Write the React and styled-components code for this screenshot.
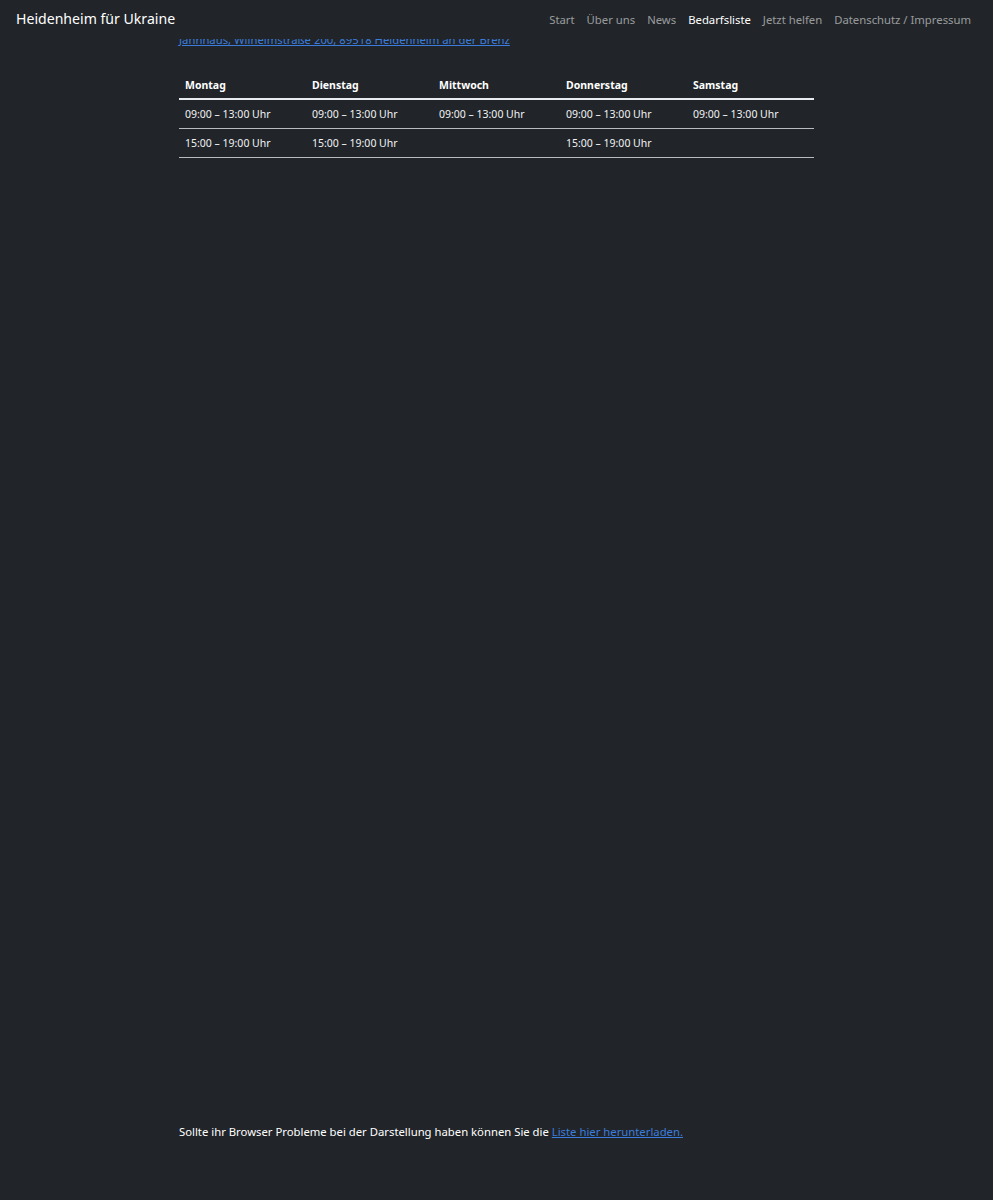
import React from "react";
import styled, { createGlobalStyle } from "styled-components";

const Global = createGlobalStyle`
  html, body { margin: 0; padding: 0; background: #212529; }
  body {
    font-family: "Noto Sans", "Open Sans", sans-serif;
    color: #e9ecef;
    min-height: 1200px;
  }
`;

const Navbar = styled.nav`
  position: fixed;
  top: 0;
  left: 0;
  right: 0;
  height: 36px;
  background: #212529;
  display: flex;
  align-items: center;
  justify-content: space-between;
  padding: 0 22px 3px 16px;
  z-index: 10;
`;

const Brand = styled.a`
  color: #fff;
  font-size: 14.1px;
  text-decoration: none;
`;

const NavList = styled.ul`
  display: flex;
  gap: 12px;
  list-style: none;
  margin: 0;
  padding: 0;
`;

const NavLink = styled.a`
  font-size: 11.3px;
  text-decoration: none;
  color: ${(p) => (p.$active ? "#ffffff" : "rgba(255,255,255,0.55)")};
`;

const Main = styled.main`
  width: 635px;
  margin: 0 auto;
  padding-top: 31px;
`;

const Address = styled.a`
  display: block;
  font-size: 11.3px;
  line-height: 18px;
  color: #3b7ddd;
  text-decoration: underline;
`;

const Table = styled.table`
  width: 100%;
  border-collapse: collapse;
  table-layout: fixed;
  margin-top: 22px;
  font-size: 10.5px;
`;

const Th = styled.th`
  text-align: left;
  font-weight: 700;
  color: #fff;
  padding: 7px 6px 6px;
  border-bottom: 2px solid #e9ecef;
`;

const Td = styled.td`
  color: #f1f3f5;
  padding: 7px 6px;
  border-bottom: 1px solid #b8bcc0;
  height: 14px;
`;

const SheetFrame = styled.div`
  height: 966px;
`;

const Note = styled.p`
  margin: 0;
  font-size: 11.3px;
  color: #fff;
`;

const NoteLink = styled.a`
  color: #3b7ddd;
  text-decoration: underline;
`;

const days = ["Montag", "Dienstag", "Mittwoch", "Donnerstag", "Samstag"];
const rows = [
  ["09:00 – 13:00 Uhr", "09:00 – 13:00 Uhr", "09:00 – 13:00 Uhr", "09:00 – 13:00 Uhr", "09:00 – 13:00 Uhr"],
  ["15:00 – 19:00 Uhr", "15:00 – 19:00 Uhr", "", "15:00 – 19:00 Uhr", ""],
];

const links = ["Start", "Über uns", "News", "Bedarfsliste", "Jetzt helfen", "Datenschutz / Impressum"];

export default function App() {
  return (
    <>
      <Global />
      <Navbar>
        <Brand href="#">Heidenheim für Ukraine</Brand>
        <NavList>
          {links.map((l) => (
            <li key={l}>
              <NavLink href="#" $active={l === "Bedarfsliste"}>{l}</NavLink>
            </li>
          ))}
        </NavList>
      </Navbar>
      <Main>
        <Address href="#">Jahnhaus, Wilhelmstraße 200, 89518 Heidenheim an der Brenz</Address>
        <Table>
          <thead>
            <tr>
              {days.map((d) => (
                <Th key={d}>{d}</Th>
              ))}
            </tr>
          </thead>
          <tbody>
            {rows.map((r, i) => (
              <tr key={i}>
                {r.map((c, j) => (
                  <Td key={j}>{c}</Td>
                ))}
              </tr>
            ))}
          </tbody>
        </Table>
        <SheetFrame />
        <Note>
          Sollte ihr Browser Probleme bei der Darstellung haben können Sie die{" "}
          <NoteLink href="#">Liste hier herunterladen.</NoteLink>
        </Note>
      </Main>
    </>
  );
}
